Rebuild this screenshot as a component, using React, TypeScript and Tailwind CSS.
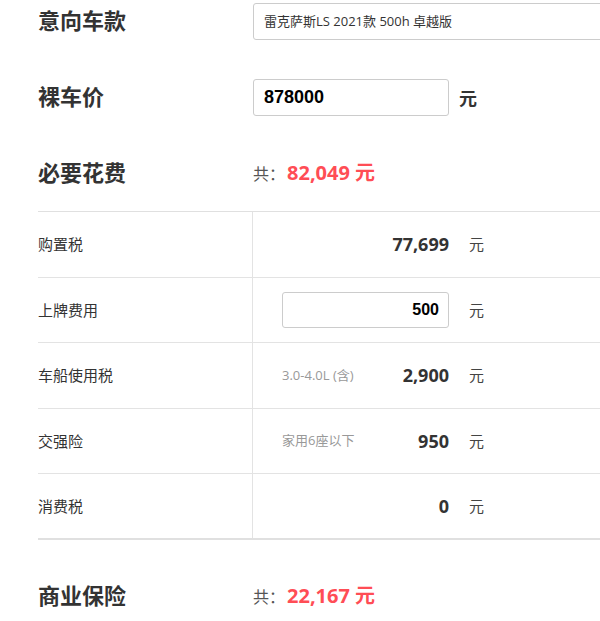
import React from "react";

const font = "font-['Open_Sans','Noto_Sans_CJK_SC',sans-serif]";

type FeeRow = {
  label: string;
  desc?: string;
  value: string;
  editable?: boolean;
};

const fees: FeeRow[] = [
  { label: "购置税", value: "77,699" },
  { label: "上牌费用", value: "500", editable: true },
  { label: "车船使用税", desc: "3.0-4.0L (含)", value: "2,900" },
  { label: "交强险", desc: "家用6座以下", value: "950" },
  { label: "消费税", value: "0" },
];

function SectionTitle({ children }: { children: React.ReactNode }) {
  return (
    <div className="w-[215px] shrink-0 pb-[6px] text-[22px] font-bold text-[#333] font-['Noto_Sans_CJK_SC',sans-serif] leading-none">
      {children}
    </div>
  );
}

function Total({ amount }: { amount: string }) {
  return (
    <div className="flex items-center pb-[2px]">
      <span className="text-[16px] text-[#555] font-['Noto_Sans_CJK_SC',sans-serif]">共：</span>
      <span className="ml-[2px] text-[20px] font-bold text-[#ff4d55]">{amount} 元</span>
    </div>
  );
}

export default function App() {
  return (
    <div className={`w-[600px] h-[621px] overflow-hidden bg-white pl-[38px] ${font}`}>
      {/* 意向车款 */}
      <div className="mt-[3px] flex h-[37px] items-center">
        <SectionTitle>意向车款</SectionTitle>
        <div className="flex h-[37px] w-[420px] shrink-0 items-center rounded-[3px] border border-[#ccc] px-[10px] text-[13px] text-[#333]">
          雷克萨斯LS 2021款 500h 卓越版
        </div>
      </div>

      {/* 裸车价 */}
      <div className="mt-[39px] flex h-[37px] items-center">
        <SectionTitle>裸车价</SectionTitle>
        <div className="flex h-[37px] w-[196px] items-center rounded-[3px] border border-[#ccc] px-[10px] font-['Liberation_Sans',Arial,sans-serif] text-[18px] font-bold text-black">
          878000
        </div>
        <span className="ml-[10px] text-[18px] font-bold text-[#333] font-['Noto_Sans_CJK_SC',sans-serif]">元</span>
      </div>

      {/* 必要花费 */}
      <div className="mt-[39px] flex h-[37px] items-center">
        <SectionTitle>必要花费</SectionTitle>
        <Total amount="82,049" />
      </div>

      <div className="mt-[19px] border-t border-[#e0e0e0]">
        {fees.map((f, i) => (
          <div
            key={f.label}
            className={`flex h-[65.6px] ${
              i === fees.length - 1 ? "border-b-2 border-[#e0e0e0]" : "border-b border-[#e3e3e3]"
            }`}
          >
            <div className="flex w-[215px] shrink-0 items-center border-r border-[#e3e3e3] text-[15px] text-[#333] font-['Noto_Sans_CJK_SC',sans-serif]">
              {f.label}
            </div>
            <div className="flex items-center pl-[29px]">
              {f.editable ? (
                <div className="flex h-[36px] w-[167px] items-center justify-end rounded-[3px] border border-[#ccc] pr-[9px] font-['Liberation_Sans',Arial,sans-serif] text-[16px] font-bold text-black">
                  {f.value}
                </div>
              ) : (
                <div className="flex w-[167px] items-center justify-between">
                  <span className="text-[13px] text-[#999]">{f.desc}</span>
                  <span className="text-[18px] font-bold text-[#333]">{f.value}</span>
                </div>
              )}
              <span className="ml-[20px] text-[15px] text-[#444] font-['Noto_Sans_CJK_SC',sans-serif]">元</span>
            </div>
          </div>
        ))}
      </div>

      {/* 商业保险 */}
      <div className="mt-[39px] flex h-[37px] items-center">
        <SectionTitle>商业保险</SectionTitle>
        <Total amount="22,167" />
      </div>
    </div>
  );
}
